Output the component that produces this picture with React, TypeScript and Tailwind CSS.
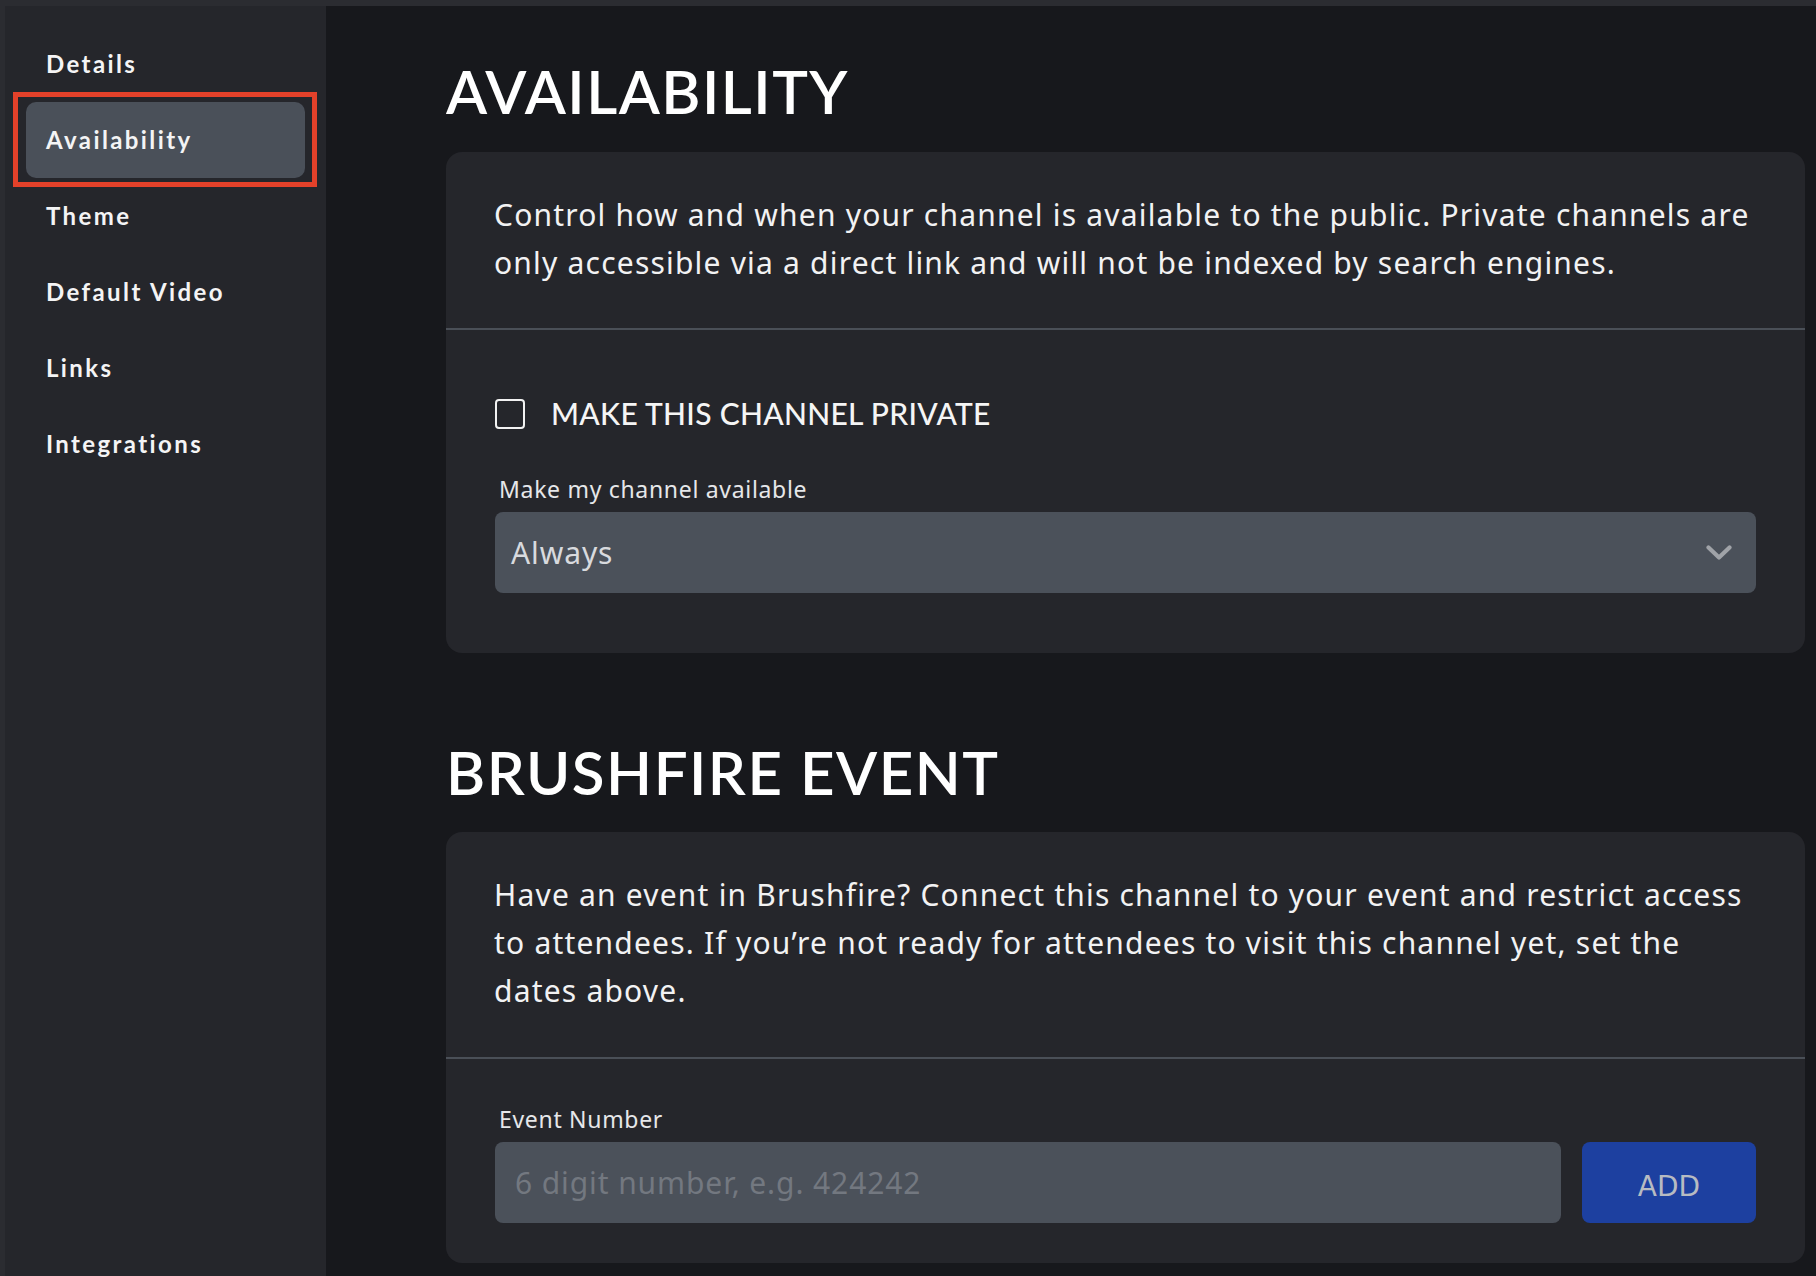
import React from "react";

const navItems = ["Details", "Availability", "Theme", "Default Video", "Links", "Integrations"];

function Chevron() {
  return (
    <svg width="26" height="16" viewBox="0 0 26 16" fill="none" className="shrink-0">
      <polyline points="2.5,2.5 13,12.5 23.5,2.5" stroke="#a0a3a8" strokeWidth="4.2" strokeLinecap="round" strokeLinejoin="round" />
    </svg>
  );
}

export default function App() {
  return (
    <div className="flex h-[1276px] w-full overflow-hidden border-t-[6px] border-l-[5px] border-[#2b2c31] bg-[#17181c] font-['Noto_Sans',sans-serif]">
      {/* Sidebar */}
      <aside className="w-[321px] shrink-0 bg-[#25262b] pt-[20px]">
        <nav className="flex flex-col">
          {navItems.map((item) => {
            const active = item === "Availability";
            return (
              <div
                key={item}
                className={
                  active
                    ? "relative mx-[21px] flex h-[76px] items-center rounded-[10px] bg-[#4a5059] px-[20px]"
                    : "relative mx-[21px] flex h-[76px] items-center px-[20px]"
                }
              >
                <span className="font-['Lato',sans-serif] text-[24px] font-bold tracking-[0.1em] text-[#f4f4f5]">{item}</span>
                {active && (
                  <span className="pointer-events-none absolute -top-[10px] -bottom-[9px] -left-[13px] -right-[12px] border-[5px] border-[#e4412a]" />
                )}
              </div>
            );
          })}
        </nav>
      </aside>

      {/* Main */}
      <main className="flex-1 pl-[120px] pr-[11px]">
        <h1 className="mt-[55px] mb-[31px] font-['Lato',sans-serif] text-[60px] leading-[60px] font-semibold tracking-[0.025em] text-white">
          AVAILABILITY
        </h1>

        <section className="rounded-[16px] bg-[#25262b]">
          <div className="px-[48px] pt-[39px] pb-[41px]">
            <p className="text-[30px] leading-[48px] tracking-[0.04em] text-[#f2f2f3]">
              Control how and when your channel is available to the public. Private channels are only accessible via a
              direct link and will not be indexed by search engines.
            </p>
          </div>
          <div className="h-[2px] bg-[#4a4f57]" />
          <div className="px-[49px] pt-[68px] pb-[60px]">
            <label className="flex h-[31px] items-center gap-[26px]">
              <span className="h-[30px] w-[30px] rounded-[4px] border-2 border-[#f2f2f2]" />
              <span className="font-['Lato',sans-serif] text-[30px] font-medium tracking-[0.01em] text-[#f5f5f5]">
                MAKE THIS CHANNEL PRIVATE
              </span>
            </label>
            <div className="mt-[46px] pl-[4px] text-[23px] leading-[28px] tracking-[0.03em] text-[#e6e7e9]">
              Make my channel available
            </div>
            <div className="mt-[9px] flex h-[81px] items-center justify-between rounded-[8px] bg-[#4b515a] pl-[16px] pr-[24px]">
              <span className="text-[30px] tracking-[0.03em] text-[#d8dade]">Always</span>
              <Chevron />
            </div>
          </div>
        </section>

        <h1 className="mt-[89px] mb-[30px] font-['Lato',sans-serif] text-[60px] leading-[60px] font-semibold tracking-[0.025em] text-white">
          BRUSHFIRE EVENT
        </h1>

        <section className="rounded-[16px] bg-[#25262b]">
          <div className="px-[48px] pt-[39px] pb-[42px]">
            <p className="text-[30px] leading-[48px] tracking-[0.04em] text-[#f2f2f3]">
              Have an event in Brushfire? Connect this channel to your event and restrict access to attendees. If
              you’re not ready for attendees to visit this channel yet, set the dates above.
            </p>
          </div>
          <div className="h-[2px] bg-[#4a4f57]" />
          <div className="px-[49px] pt-[46px] pb-[40px]">
            <div className="pl-[4px] text-[23px] leading-[28px] tracking-[0.03em] text-[#e6e7e9]">Event Number</div>
            <div className="mt-[9px] flex h-[81px] gap-[21px]">
              <div className="flex flex-1 items-center rounded-[8px] bg-[#4b515a] pl-[20px]">
                <span className="text-[30px] tracking-[0.03em] text-[#737880]">6 digit number, e.g. 424242</span>
              </div>
              <button className="flex w-[174px] items-center justify-center rounded-[8px] bg-[#1d40a0] pt-[8px] font-['DejaVu_Sans',sans-serif] text-[28px] text-[#b7bbc2]">
                ADD
              </button>
            </div>
          </div>
        </section>
      </main>
    </div>
  );
}
